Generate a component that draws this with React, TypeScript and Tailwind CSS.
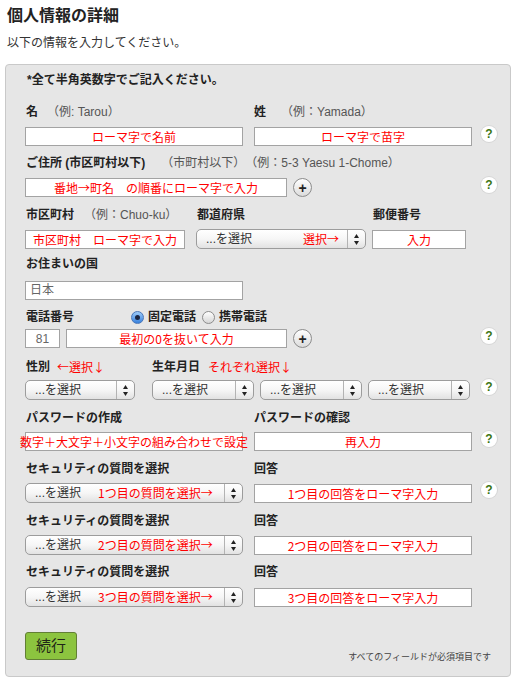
import React from "react";

const Help = () => (
  <div className="ml-auto relative -top-[3px] w-[16px] h-[16px] rounded-full bg-white shadow-[0_0_0_1px_rgba(0,0,0,0.07)] flex items-center justify-center text-[12px] font-bold text-[#3b7514] leading-none">
    ?
  </div>
);

const Plus = () => (
  <div className="w-[19px] h-[19px] rounded-full border border-[#8c8c8c] bg-linear-to-b from-white to-[#dcdcdc] flex items-center justify-center text-[14px] leading-none text-[#222] font-bold">
    +
  </div>
);

const Arrows = () => (
  <svg width="5" height="11" viewBox="0 0 5 11">
    <polygon points="0,4 2.5,0 5,4" fill="#222" />
    <polygon points="0,7 2.5,11 5,7" fill="#222" />
  </svg>
);

const Input = ({ w, text, gray }: { w: string; text?: string; gray?: boolean }) => (
  <div
    className={`${w} h-[19px] border border-[#a3a3a3] bg-white flex items-center whitespace-nowrap text-[12px] leading-[17px] ${
      gray ? "justify-start pl-[4px] text-[#666]" : "justify-center text-[#ff0000] font-['Noto_Sans_CJK_JP',sans-serif]"
    }`}
  >
    {text}
  </div>
);

const Select = ({ w, red, redPos }: { w: string; red?: string; redPos?: string }) => (
  <div
    className={`${w} relative h-[20px] rounded-[5px] border border-[#9c9c9c] bg-linear-to-b from-white via-[#f6f6f6] to-[#e2e2e2] flex items-stretch`}
  >
    <div className="flex-1 flex items-center pl-[9px] text-[12px] text-[#333] whitespace-nowrap">...を選択</div>
    {red && (
      <span
        className={`absolute top-0 h-[18px] flex items-center text-[12px] text-[#ff0000] whitespace-nowrap font-['Noto_Sans_CJK_JP',sans-serif] ${redPos}`}
      >
        {red}
      </span>
    )}
    <div className="w-[18px] border-l border-[#b3b3b3] flex items-center justify-center">
      <Arrows />
    </div>
  </div>
);

const Radio = ({ on }: { on?: boolean }) =>
  on ? (
    <div className="w-[13px] h-[13px] rounded-full border border-[#4a77b8] bg-linear-to-b from-[#9dcbf8] to-[#3580dc] flex items-center justify-center">
      <div className="w-[5px] h-[5px] rounded-full bg-[#1b2540]" />
    </div>
  ) : (
    <div className="w-[13px] h-[13px] rounded-full border border-[#8c8c8c] bg-linear-to-b from-white to-[#d6d6d6]" />
  );

const Label = ({ children, className = "" }: { children: React.ReactNode; className?: string }) => (
  <div className={`flex h-[16px] items-center text-[12px] leading-[16px] whitespace-nowrap ${className}`}>{children}</div>
);

const B = ({ children }: { children: React.ReactNode }) => <span className="font-bold text-[#222]">{children}</span>;
const G = ({ children, className = "" }: { children: React.ReactNode; className?: string }) => (
  <span className={`text-[#555] ${className}`}>{children}</span>
);
const R = ({ children, className = "" }: { children: React.ReactNode; className?: string }) => (
  <span className={`text-[#ff0000] font-['Noto_Sans_CJK_JP',sans-serif] ${className}`}>{children}</span>
);

export default function App() {
  return (
    <div className="w-[515px] h-[682px] bg-white text-[#222] font-['Liberation_Sans','Noto_Sans_CJK_JP',sans-serif] overflow-hidden">
      <h1 className="pl-[7px] pt-[6px] text-[16px] leading-[20px] font-bold text-[#222]">個人情報の詳細</h1>
      <p className="pl-[7px] mt-[9px] text-[12px] leading-[16px] text-[#333]">以下の情報を入力してください。</p>

      <div className="ml-[5px] mt-[13px] w-[506px] h-[613px] border border-[#c9c9c9] rounded-[4px] bg-[#e6e6e6] pl-[19px] pr-[13px] pt-[7px] flex flex-col">
        <div className="pl-[2px] text-[12px] leading-[16px] font-bold text-[#222]">*全て半角英数字でご記入ください。</div>

        {/* Row 1: name */}
        <div className="mt-[16px]">
          <Label className="pl-[1px]">
            <div className="w-[228px] flex">
              <B>名</B>
              <G className="ml-[9px]">（例: Tarou）</G>
            </div>
            <B>姓</B>
            <G className="ml-[15px]">（例：Yamada）</G>
          </Label>
          <div className="mt-[7px] flex items-center h-[19px]">
            <Input w="w-[218px]" text="ローマ字で名前" />
            <div className="ml-[11px]">
              <Input w="w-[218px]" text="ローマ字で苗字" />
            </div>
            <Help />
          </div>
        </div>

        {/* Row 2: address */}
        <div className="mt-[9px]">
          <Label className="pl-[1px]">
            <B>ご住所 (市区町村以下)</B>
            <G className="ml-[16px]">（市町村以下）</G>
            <G>（例：5-3 Yaesu 1-Chome）</G>
          </Label>
          <div className="mt-[7px] flex items-center h-[19px]">
            <Input w="w-[262px]" text="番地→町名　の順番にローマ字で入力" />
            <div className="ml-[6px]">
              <Plus />
            </div>
            <Help />
          </div>
        </div>

        {/* Row 3: city / prefecture / zip */}
        <div className="mt-[10px]">
          <Label className="pl-[1px]">
            <div className="w-[171px] flex">
              <B>市区町村</B>
              <G className="ml-[10px]">（例：Chuo-ku）</G>
            </div>
            <div className="w-[176px]">
              <B>都道府県</B>
            </div>
            <B>郵便番号</B>
          </Label>
          <div className="mt-[6px] flex items-center h-[20px]">
            <Input w="w-[160px]" text="市区町村　ローマ字で入力" />
            <div className="ml-[11px]">
              <Select w="w-[170px]" red="選択→" redPos="left-[106px]" />
            </div>
            <div className="ml-[6px]">
              <Input w="w-[94px]" text="入力" />
            </div>
          </div>
        </div>

        {/* Row 4: country */}
        <div className="mt-[7px]">
          <Label className="pl-[1px]">
            <B>お住まいの国</B>
          </Label>
          <div className="mt-[9px] flex items-center h-[19px]">
            <Input w="w-[218px]" text="日本" gray />
          </div>
        </div>

        {/* Row 5: phone */}
        <div className="mt-[9px]">
          <Label className="pl-[1px]">
            <div className="w-[105px]">
              <B>電話番号</B>
            </div>
            <Radio on />
            <span className="ml-[4px] font-bold text-[#222]">固定電話</span>
            <div className="ml-[6px]">
              <Radio />
            </div>
            <span className="ml-[4px] font-bold text-[#222]">携帯電話</span>
          </Label>
          <div className="mt-[4px] flex items-center h-[19px]">
            <div className="w-[35px] h-[19px] border border-[#a3a3a3] bg-white flex items-center justify-center text-[12px] text-[#666]">
              81
            </div>
            <div className="ml-[6px]">
              <Input w="w-[221px]" text="最初の0を抜いて入力" />
            </div>
            <div className="ml-[6px]">
              <Plus />
            </div>
            <Help />
          </div>
        </div>

        {/* Row 6: gender / birthday */}
        <div className="mt-[11px]">
          <Label className="pl-[1px]">
            <div className="w-[126px] flex">
              <B>性別</B>
              <R className="ml-[7px]">←選択↓</R>
            </div>
            <B>生年月日</B>
            <R className="ml-[8px]">それぞれ選択↓</R>
          </Label>
          <div className="mt-[5px] flex items-center h-[20px]">
            <Select w="w-[110px]" />
            <div className="ml-[17px]">
              <Select w="w-[102px]" />
            </div>
            <div className="ml-[6px]">
              <Select w="w-[102px]" />
            </div>
            <div className="ml-[6px]">
              <Select w="w-[102px]" />
            </div>
            <Help />
          </div>
        </div>

        {/* Row 7: password */}
        <div className="mt-[10px]">
          <Label className="pl-[1px]">
            <div className="w-[228px]">
              <B>パスワードの作成</B>
            </div>
            <B>パスワードの確認</B>
          </Label>
          <div className="mt-[6px] flex items-center h-[19px]">
            <Input w="w-[218px]" text="数字＋大文字＋小文字の組み合わせで設定" />
            <div className="ml-[11px]">
              <Input w="w-[218px]" text="再入力" />
            </div>
            <Help />
          </div>
        </div>

        {/* Rows 8-10: security questions */}
        {[
          { q: "1つ目の質問を選択→", a: "1つ目の回答をローマ字入力", help: true, mt: "mt-[10px]", gap: "mt-[6px]" },
          { q: "2つ目の質問を選択→", a: "2つ目の回答をローマ字入力", help: false, mt: "mt-[10px]", gap: "mt-[6px]" },
          { q: "3つ目の質問を選択→", a: "3つ目の回答をローマ字入力", help: false, mt: "mt-[9px]", gap: "mt-[7px]" },
        ].map((r, i) => (
          <div key={i} className={r.mt}>
            <Label className="pl-[1px]">
              <div className="w-[228px]">
                <B>セキュリティの質問を選択</B>
              </div>
              <B>回答</B>
            </Label>
            <div className={`${r.gap} flex items-center h-[20px]`}>
              <Select w="w-[218px]" red={r.q} redPos="left-[72px]" />
              <div className="ml-[11px]">
                <Input w="w-[218px]" text={r.a} />
              </div>
              {r.help && <Help />}
            </div>
          </div>
        ))}

        {/* Footer */}
        <div className="mt-[25px] flex items-start">
          <div className="w-[52px] h-[28px] rounded-[3px] border border-[#627f35] bg-[#8cc43f] flex items-center justify-center text-[15px] text-[#1f2417]">
            続行
          </div>
          <div className="ml-auto mr-[6px] mt-[19px] text-[9px] leading-[12px] text-[#444]">すべてのフィールドが必須項目です</div>
        </div>
      </div>
    </div>
  );
}
